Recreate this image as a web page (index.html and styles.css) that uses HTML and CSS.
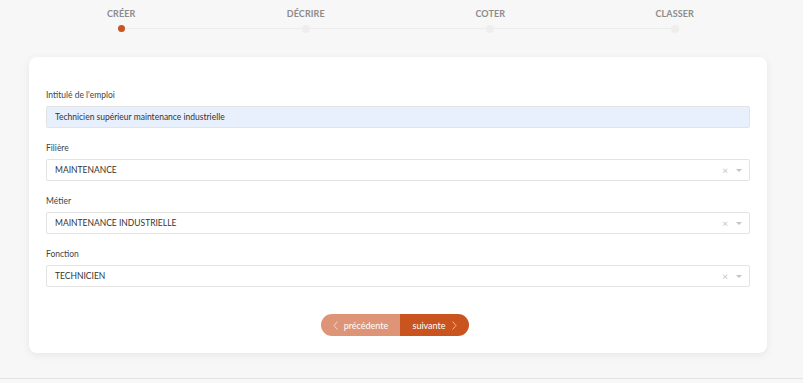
FILE: index.html
```html
<!DOCTYPE html>
<html lang="fr">
<head>
    <meta charset="UTF-8">
    <meta name="viewport" content="width=device-width, initial-scale=1.0">
    <title>Créer un emploi</title>
    <link rel="stylesheet" href="styles.css">
</head>
<body>
    <div class="page">
        <div class="stepper">
            <div class="stepper-line"></div>
            <div class="step active">
                <div class="step-label">CRÉER</div>
                <div class="step-dot"></div>
            </div>
            <div class="step">
                <div class="step-label">DÉCRIRE</div>
                <div class="step-dot"></div>
            </div>
            <div class="step">
                <div class="step-label">COTER</div>
                <div class="step-dot"></div>
            </div>
            <div class="step">
                <div class="step-label">CLASSER</div>
                <div class="step-dot"></div>
            </div>
        </div>

        <form class="card">
            <div class="field">
                <label class="field-label" for="intitule">Intitulé de l'emploi</label>
                <input class="text-input" id="intitule" type="text" value="Technicien supérieur maintenance industrielle">
            </div>

            <div class="field">
                <div class="field-label">Filière</div>
                <div class="select">
                    <span class="select-value">MAINTENANCE</span>
                    <span class="select-clear">&times;</span>
                    <span class="select-arrow"></span>
                </div>
            </div>

            <div class="field">
                <div class="field-label">Métier</div>
                <div class="select">
                    <span class="select-value">MAINTENANCE INDUSTRIELLE</span>
                    <span class="select-clear">&times;</span>
                    <span class="select-arrow"></span>
                </div>
            </div>

            <div class="field">
                <div class="field-label">Fonction</div>
                <div class="select">
                    <span class="select-value">TECHNICIEN</span>
                    <span class="select-clear">&times;</span>
                    <span class="select-arrow"></span>
                </div>
            </div>

            <div class="nav-buttons">
                <button type="button" class="nav-btn prev-btn">
                    <svg width="5" height="9" viewBox="0 0 5 9"><path d="M4.5 0.5 L1 4.5 L4.5 8.5" fill="none" stroke="currentColor" stroke-width="0.8"/></svg>
                    précédente
                </button>
                <button type="button" class="nav-btn next-btn">
                    suivante
                    <svg width="5" height="9" viewBox="0 0 5 9"><path d="M0.5 0.5 L4 4.5 L0.5 8.5" fill="none" stroke="currentColor" stroke-width="0.8"/></svg>
                </button>
            </div>
        </form>
    </div>
</body>
</html>
```

FILE: styles.css
```css
:root {
    --accent: #c9541f;
    --accent-light: #de9476;
    --bg: #f7f7f7;
    --border: #e3e3e3;
    --label: #444;
    --muted: #8c8c8c;
}

body {
    margin: 0;
    background-color: var(--bg);
    font-family: Lato, 'Noto Sans', sans-serif;
    color: #333;
}

.page {
    height: 379px;
    border-bottom: 1px solid #e2e2e2;
    box-sizing: border-box;
    padding: 0 36px 0 29px;
}

.stepper {
    position: relative;
    display: flex;
    padding-top: 8px;
}

.stepper-line {
    position: absolute;
    left: 92px;
    right: 92px;
    top: 28px;
    height: 1px;
    background-color: #ececec;
}

.step {
    flex: 1;
    display: flex;
    flex-direction: column;
    align-items: center;
    position: relative;
}

.step-label {
    font-size: 9px;
    font-weight: 700;
    color: var(--muted);
    line-height: 12px;
    letter-spacing: 0.1px;
}

.step-dot {
    width: 8px;
    height: 8px;
    border-radius: 50%;
    background-color: #eeeeee;
    margin-top: 5px;
}

.step.active .step-dot {
    width: 7px;
    height: 7px;
    background-color: var(--accent);
}

.card {
    margin-top: 24px;
    background-color: #fff;
    border-radius: 8px;
    box-shadow: 0 2px 8px rgba(0, 0, 0, 0.07);
    padding: 32px 17px 17px;
    display: flex;
    flex-direction: column;
    gap: 14px;
}

.field {
    display: flex;
    flex-direction: column;
    gap: 5px;
}

.field-label {
    font-size: 8.5px;
    line-height: 12px;
    color: var(--label);
}

.text-input,
.select {
    height: 22px;
    box-sizing: border-box;
    border: 1px solid var(--border);
    border-radius: 2px;
    font-family: inherit;
    font-size: 8.5px;
    color: #333;
}

.text-input {
    background-color: #e8f0fe;
    padding: 0 8px;
    outline: none;
}

.select {
    display: flex;
    align-items: center;
    padding: 0 7px 0 8px;
    background-color: #fff;
}

.select-value {
    flex: 1;
}

.select-clear {
    color: #c4c4c4;
    font-size: 10px;
    margin-right: 8px;
}

.select-arrow {
    width: 0;
    height: 0;
    border-left: 3px solid transparent;
    border-right: 3px solid transparent;
    border-top: 3px solid #c4c4c4;
}

.nav-buttons {
    display: flex;
    justify-content: center;
    margin-top: 13px;
    padding-right: 6px;
}

.nav-btn {
    height: 22px;
    border: none;
    color: #fff;
    font-family: inherit;
    font-size: 9px;
    display: flex;
    align-items: center;
    gap: 6px;
    cursor: pointer;
}

.nav-btn svg {
    opacity: 0.75;
}

.prev-btn {
    width: 79px;
    justify-content: center;
    background-color: var(--accent-light);
    border-radius: 11px 0 0 11px;
}

.next-btn {
    width: 69px;
    justify-content: center;
    background-color: var(--accent);
    border-radius: 0 11px 11px 0;
}
```
